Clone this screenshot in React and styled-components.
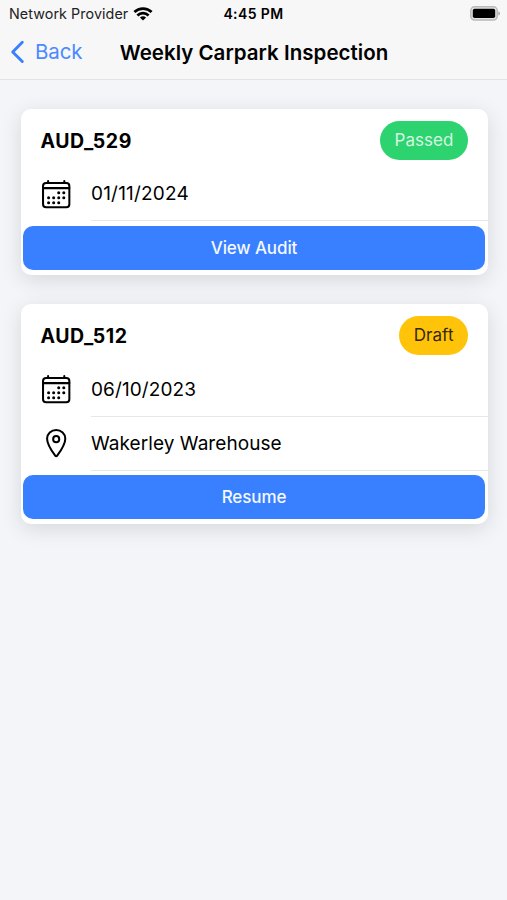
import React from "react";
import styled, { createGlobalStyle } from "styled-components";

const GlobalStyle = createGlobalStyle`
  * { box-sizing: border-box; }
  body {
    margin: 0;
    background: #f4f5f9;
    font-family: Inter, "Liberation Sans", sans-serif;
    color: #000;
  }
`;

const Screen = styled.div`
  width: 507px;
  height: 900px;
  overflow: hidden;
  background: #f4f5f9;
`;

const Header = styled.header`
  height: 79.5px;
  background: #f7f7f7;
  border-bottom: 1.5px solid #e2e3e5;
`;

const StatusBar = styled.div`
  height: 27px;
  display: grid;
  grid-template-columns: 1fr auto 1fr;
  align-items: center;
  padding: 0 6px 0 9px;
  font-size: 14px;
  line-height: 18px;
`;

const Carrier = styled.div`
  display: flex;
  align-items: center;
  gap: 4.5px;
  color: #222;
  font-size: 14.3px;
  letter-spacing: 0.08px;
  white-space: nowrap;
`;

const Clock = styled.div`
  margin-right: 3px;
  font-weight: 600;
  font-size: 14px;
  letter-spacing: 0.4px;
`;

const BatterySlot = styled.div`
  display: flex;
  justify-content: flex-end;
`;

const Toolbar = styled.div`
  height: 50px;
  display: grid;
  grid-template-columns: 1fr auto 1fr;
  align-items: center;
  padding: 0 9px 0 10px;
`;

const BackButton = styled.button`
  display: flex;
  align-items: center;
  gap: 10px;
  padding: 0;
  border: 0;
  background: none;
  color: #4b8aff;
  font: 400 20.5px/26px Inter, sans-serif;
  letter-spacing: -0.1px;
`;

const Title = styled.h1`
  margin: 1px 0 0;
  font-size: 20.5px;
  line-height: 26px;
  font-weight: 600;
  letter-spacing: 0.03px;
  white-space: nowrap;
`;

const Cards = styled.main`
  display: flex;
  flex-direction: column;
  gap: 29.5px;
  padding: 29px 19px 0 20.5px;
`;

const Card = styled.section`
  padding-bottom: 5px;
  border-radius: 10px;
  background: #fff;
  box-shadow: 0 5px 21px rgba(0, 0, 0, 0.12);
`;

const CardHeader = styled.div`
  height: 58.5px;
  display: flex;
  align-items: flex-start;
  justify-content: space-between;
  padding: 12px 20px 0;
`;

const CardTitle = styled.h2`
  margin: 0;
  font-size: 19.5px;
  line-height: 41px;
  font-weight: 700;
  letter-spacing: 0.55px;
`;

const Pill = styled.span`
  height: 39px;
  padding: 0 14.5px;
  border-radius: 20px;
  background: ${(p) => (p.$tone === "success" ? "#2dd36f" : "#ffc409")};
  color: ${(p) => (p.$tone === "success" ? "#d5f6e2" : "#33280a")};
  font-size: 17px;
  line-height: 38px;
  letter-spacing: 0.05px;
`;

const DetailRow = styled.div`
  height: 54px;
  display: flex;
  padding-left: 19px;
`;

const IconSlot = styled.div`
  width: 51.5px;
  display: flex;
  align-items: center;
`;

const Detail = styled.div`
  flex: 1;
  border-bottom: 1.4px solid #e8e8e9;
  font-size: 19px;
  line-height: 54.6px;
  letter-spacing: ${(p) => p.$tracking || "0"};
`;

const ActionButton = styled.button`
  display: block;
  width: calc(100% - 5.5px);
  height: 44px;
  margin: 4.5px 2.5px 0;
  padding: 0;
  border: 0;
  border-radius: 10px;
  background: #3880ff;
  color: #f4f8ff;
  font: 500 17px/44px Inter, sans-serif;
  letter-spacing: -0.1px;
`;

const OutlineIcon = styled.svg`
  width: 32.4px;
  height: 32.4px;
  fill: none;
  stroke: #000;
  stroke-width: 32;
  stroke-linejoin: round;
  stroke-linecap: round;
`;

function CalendarIcon() {
  const dots = [
    [296, 232], [376, 232],
    [136, 312], [216, 312], [296, 312], [376, 312],
    [136, 392], [216, 392], [296, 392],
  ];
  return (
    <OutlineIcon viewBox="0 0 512 512">
      <rect x="48" y="80" width="416" height="384" rx="48" />
      <path d="M128 48v32M384 48v32M464 160H48" />
      {dots.map(([x, y]) => (
        <circle key={`${x}-${y}`} cx={x} cy={y} r="24" fill="#000" stroke="none" />
      ))}
    </OutlineIcon>
  );
}

function LocationIcon() {
  return (
    <OutlineIcon viewBox="0 0 512 512">
      <path d="M256 48c-79.5 0-144 61.39-144 137 0 87 96 224.87 131.25 272.49a15.77 15.77 0 0 0 25.5 0C304 409.89 400 272.07 400 185c0-75.61-64.5-137-144-137z" />
      <circle cx="256" cy="192" r="48" />
    </OutlineIcon>
  );
}

function WifiIcon() {
  return (
    <svg width="20" height="14" viewBox="0 0 20 14" fill="none" stroke="#000" strokeWidth="2.7">
      <path d="M1.4 5a12.4 12.4 0 0 1 17.2 0" />
      <path d="M4.4 8.4a8.1 8.1 0 0 1 11.2 0" />
      <path d="M10 13.6 6.9 10.6a4.5 4.5 0 0 1 6.2 0z" fill="#000" stroke="none" />
    </svg>
  );
}

function BatteryIcon() {
  return (
    <svg width="31" height="15" viewBox="0 0 31 15">
      <rect x="0.8" y="0.8" width="26.4" height="13.2" rx="3.8" fill="#e4e4e4" stroke="#b9b9b9" strokeWidth="1.5" />
      <rect x="2.8" y="2.8" width="22.4" height="9.2" rx="1.8" fill="#000" />
      <path d="M28.3 5.2c2.3.8 2.3 3.6 0 4.4z" fill="#aaa" />
    </svg>
  );
}

function BackIcon() {
  return (
    <svg width="15" height="24" viewBox="0 0 15 24" fill="none" stroke="#3880ff" strokeWidth="2.9" strokeLinecap="round" strokeLinejoin="round">
      <path d="M12.3 2.3 2.7 12 12.3 21.5" />
    </svg>
  );
}

const audits = [
  {
    id: "AUD_529", status: "Passed", tone: "success", action: "View Audit",
    details: [{ icon: CalendarIcon, text: "01/11/2024", tracking: "0.2px" }],
  },
  {
    id: "AUD_512", status: "Draft", tone: "warning", action: "Resume",
    details: [
      { icon: CalendarIcon, text: "06/10/2023", tracking: "0.1px" },
      { icon: LocationIcon, text: "Wakerley Warehouse", tracking: "0.06px" },
    ],
  },
];

export default function App() {
  return (
    <Screen>
      <GlobalStyle />
      <Header>
        <StatusBar>
          <Carrier>Network Provider <WifiIcon /></Carrier>
          <Clock>4:45 PM</Clock>
          <BatterySlot><BatteryIcon /></BatterySlot>
        </StatusBar>
        <Toolbar>
          <BackButton><BackIcon />Back</BackButton>
          <Title>Weekly Carpark Inspection</Title>
        </Toolbar>
      </Header>
      <Cards>
        {audits.map((audit) => (
          <Card key={audit.id}>
            <CardHeader>
              <CardTitle>{audit.id}</CardTitle>
              <Pill $tone={audit.tone}>{audit.status}</Pill>
            </CardHeader>
            {audit.details.map(({ icon: Icon, text, tracking }) => (
              <DetailRow key={text}>
                <IconSlot><Icon /></IconSlot>
                <Detail $tracking={tracking}>{text}</Detail>
              </DetailRow>
            ))}
            <ActionButton>{audit.action}</ActionButton>
          </Card>
        ))}
      </Cards>
    </Screen>
  );
}
